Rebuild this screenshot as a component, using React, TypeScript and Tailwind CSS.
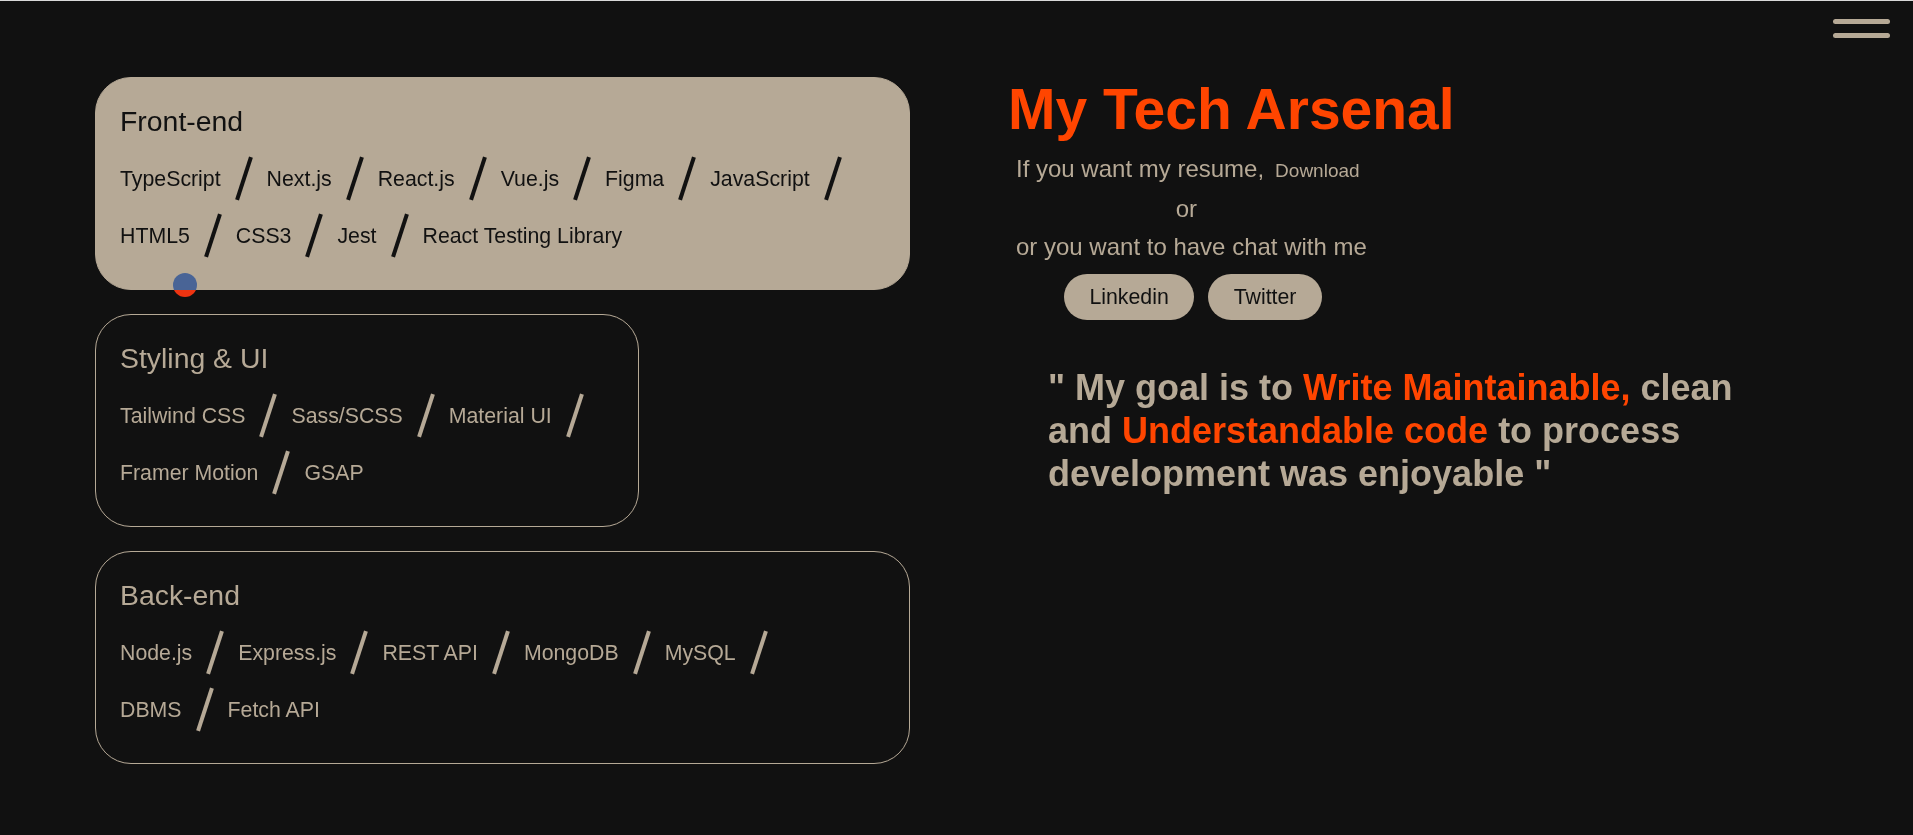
import React from "react";

const FONT = { fontFamily: '"Liberation Sans", Arial, sans-serif' };

type CardProps = {
  title: string;
  items: string[];
  filled?: boolean;
  narrow?: boolean;
};

function Card({ title, items, filled, narrow }: CardProps) {
  const textColor = filled ? "text-[#111111]" : "text-[#b6a996]";
  const barColor = filled ? "bg-[#111111]" : "bg-[#b6a996]";
  return (
    <div
      className={
        "rounded-[36px] border pl-[24px] pr-[48px] pt-[26px] pb-[31px] " +
        (filled ? "bg-[#b6a996] border-[#b6a996] " : "bg-transparent border-[#b6a996] ") +
        (narrow ? "w-[544px]" : "w-full")
      }
    >
      <div className={"text-[28.4px] leading-[34px] " + textColor}>{title}</div>
      <div className="mt-[18px] flex flex-wrap gap-x-[21px] gap-y-[12px]">
        {items.map((it, i) => (
          <div key={it} className="flex h-[45px] items-center gap-x-[21px] whitespace-nowrap">
            <span className={"text-[21.3px] leading-[24px] " + textColor}>{it}</span>
            {i < items.length - 1 && (
              <div className={"h-[45px] w-[4px] rotate-[18deg] " + barColor} />
            )}
          </div>
        ))}
      </div>
    </div>
  );
}

export default function App() {
  return (
    <div
      className="relative min-h-[835px] w-full overflow-hidden border-t border-[#d9d9d9] bg-[#111111]"
      style={FONT}
    >
      <header className="flex justify-end pr-[23px] pt-[18px]">
        <button className="flex flex-col gap-[9px]" aria-label="menu">
          <span className="block h-[5px] w-[57px] rounded-full bg-[#b6a996]" />
          <span className="block h-[5px] w-[57px] rounded-full bg-[#b6a996]" />
        </button>
      </header>

      <main className="flex pl-[95px] pt-[39px]">
        <div className="flex w-[815px] flex-col gap-[24px]">
          <Card
            filled
            title="Front-end"
            items={[
              "TypeScript",
              "Next.js",
              "React.js",
              "Vue.js",
              "Figma",
              "JavaScript",
              "HTML5",
              "CSS3",
              "Jest",
              "React Testing Library",
            ]}
          />
          <Card
            narrow
            title="Styling & UI"
            items={["Tailwind CSS", "Sass/SCSS", "Material UI", "Framer Motion", "GSAP"]}
          />
          <Card
            title="Back-end"
            items={[
              "Node.js",
              "Express.js",
              "REST API",
              "MongoDB",
              "MySQL",
              "DBMS",
              "Fetch API",
            ]}
          />
        </div>

        <div className="ml-[98px] flex flex-col items-start">
          <h1 className="text-[57px] font-bold leading-[64px] text-[#ff4500]">
            My Tech Arsenal
          </h1>
          <div className="ml-[8px] mt-[9px] flex w-fit flex-col text-[24px] leading-[38px] text-[#b6a996]">
            <div className="flex items-baseline gap-[11px]">
              <span>If you want my resume,</span>
              <a className="cursor-pointer text-[19px] leading-[38px]">Download</a>
            </div>
            <div className="self-center pr-[10px]">or</div>
            <div>or you want to have chat with me</div>
            <div className="mt-[8px] flex justify-center gap-[14px] pl-[4px]">
              <button className="h-[46px] rounded-full bg-[#b6a996] px-[25px] text-[21.3px] text-[#111111]">
                Linkedin
              </button>
              <button className="h-[46px] rounded-full bg-[#b6a996] px-[26px] text-[21.3px] text-[#111111]">
                Twitter
              </button>
            </div>
          </div>
          <p className="ml-[40px] mt-[46px] w-[720px] text-[36px] font-bold leading-[43px] text-[#b6a996]">
            " My goal is to <span className="text-[#ff4500]">Write Maintainable,</span> clean and{" "}
            <span className="text-[#ff4500]">Understandable code</span> to process development was
            enjoyable "
          </p>
        </div>
      </main>

      <div className="pointer-events-none absolute left-[173px] top-[272px] h-[24px] w-[24px] rounded-full bg-[#ff4500] mix-blend-difference" />
    </div>
  );
}
